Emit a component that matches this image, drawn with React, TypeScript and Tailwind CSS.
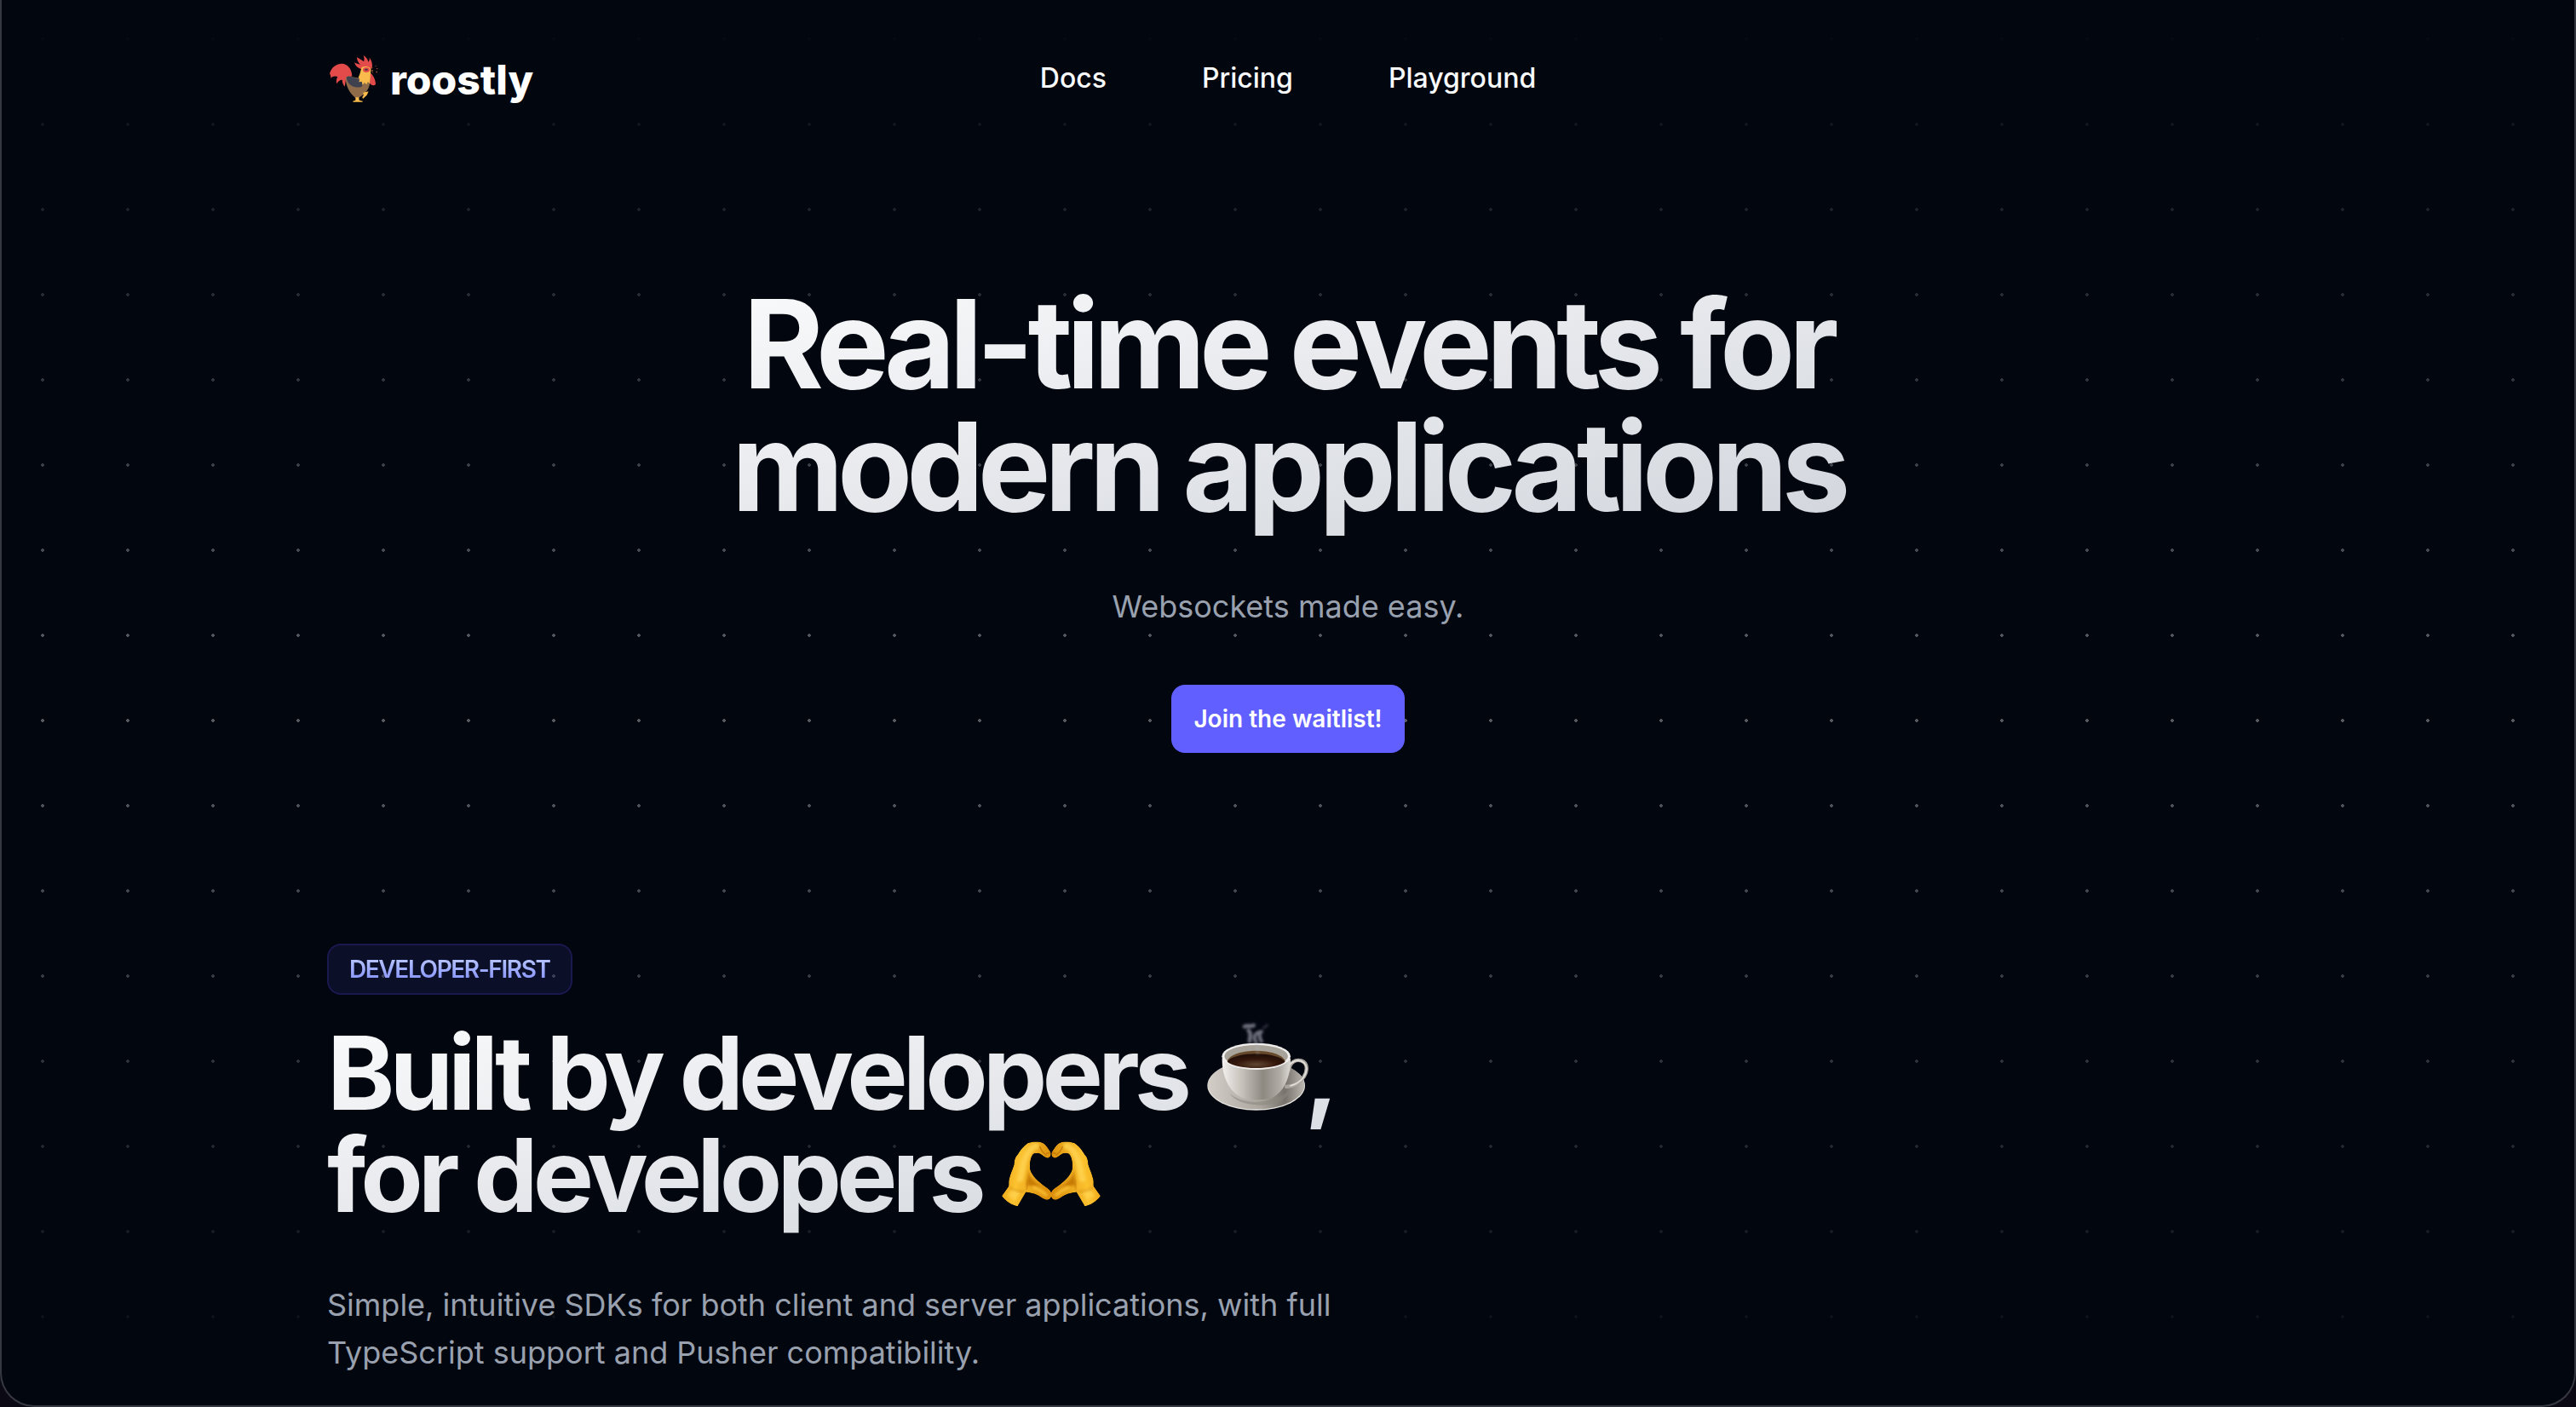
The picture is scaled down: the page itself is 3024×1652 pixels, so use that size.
import React from 'react';

const navLinks = [
  { label: 'Docs', href: '#docs' },
  { label: 'Pricing', href: '#pricing' },
  { label: 'Playground', href: '#playground' },
];

const Rooster = () => (
  <svg className="w-[60px] h-[60px]" viewBox="44 43 180 180" aria-hidden="true">
    {/* Tail */}
    <path fill="#e34b4b" d="M53 110C59 87 78 75 96 75c20 1 35 18 36 44l-20 8c-4 8-3 18-6 29-6-6-9-16-9-24-8 0-14 6-20 14-1-10 0-18 4-25-9-3-17-2-24 5 0-7-1-11-4-16z" />
    {/* Body */}
    <path fill="#8f6b4a" d="M109 124c0 30 14 56 36 73h8c20-12 38-26 42-54l-36-16-40-8z" />
    <path fill="#3f414f" d="M114 121c12-3 34 4 50 14 6 6 7 14 2 21-18 7-44-1-51-21-2-5-3-9-1-14z" />
    {/* Comb */}
    <path fill="#e34b4b" d="M140 71c7 5 14 5 21 8-8-8-12-17-12-26 7 4 16 9 24 15 3-7 2-14-1-22 9 5 15 13 17 23 4-4 5-9 4-15 8 10 12 24 9 38l-22 6-19-5c-10-3-18-11-21-22z" />
    {/* Head */}
    <path fill="#f9bb4b" d="M166 88c12-5 26-3 32 6l-2 52-9-6-4 9-7-7-7 8-3-12-10 2 3-10-5-7c7-10 7-24 12-35z" />
    <ellipse cx="182" cy="97" rx="12" ry="9" fill="#e34b4b" />
    <ellipse cx="182" cy="96" rx="6" ry="3" fill="#4b3540" />
    <path fill="#e34b4b" d="M197 108c10 9 18 24 18 40-6 7-17 4-21-5 4-12 1-24 3-35z" />
    <path fill="#94502f" d="M199 88h5v4h-5zM198 98h8v4h-8zM214 82h3v3h-3zM218 91h4v4h-4zM216 102h5v5h-5zM202 105h4v3h-4z" />
    {/* Legs */}
    <path fill="#f9bb4b" d="M144 194h12l1 10 12 3v3h-34v-3l9-3zM171 177l19-4-6 13-14 13-2-6 4-6z" />
  </svg>
);

const CoffeeCup = () => (
  <svg className="inline align-baseline overflow-visible w-[120px] h-[96px] -mr-1" viewBox="104 83 360 288" role="img" aria-label="coffee">
    <defs>
      <linearGradient id="saucer" x1="0" y1="0" x2="1" y2="0">
        <stop offset="0" stopColor="#d2cdc7" />
        <stop offset="0.55" stopColor="#aaa59d" />
        <stop offset="0.8" stopColor="#77726b" />
        <stop offset="1" stopColor="#bdb9b2" />
      </linearGradient>
      <linearGradient id="cup" x1="0" y1="0" x2="1" y2="0">
        <stop offset="0" stopColor="#f2f0ee" />
        <stop offset="0.3" stopColor="#c4bfb8" />
        <stop offset="0.6" stopColor="#8d8981" />
        <stop offset="0.85" stopColor="#b1ada6" />
        <stop offset="1" stopColor="#dedbd7" />
      </linearGradient>
      <radialGradient id="brew" cx="0.5" cy="0.75" r="0.6">
        <stop offset="0" stopColor="#5f4632" />
        <stop offset="0.6" stopColor="#35170b" />
        <stop offset="1" stopColor="#241009" />
      </radialGradient>
      <filter id="steam" x="-30%" y="-30%" width="160%" height="160%">
        <feGaussianBlur stdDeviation="4" />
      </filter>
    </defs>
    <ellipse cx="283" cy="286" rx="172" ry="87" fill="#e6e3df" />
    <ellipse cx="283" cy="283" rx="170" ry="86" fill="url(#saucer)" />
    <path d="M190 315c60 45 150 35 215-15-20 50-80 58-120 54-45-3-75-14-95-39z" fill="#8b867e" opacity="0.55" />
    <path d="M396 236c6-34 26-43 46-38 24 8 22 38 8 58-16 24-42 34-66 34" fill="none" stroke="#aaa59f" strokeWidth="13" />
    <path d="M400 214c14-18 36-22 52-8 12 14 8 34-2 50-14 20-32 27-48 31" fill="none" stroke="#e4e1dd" strokeWidth="5" />
    <path d="M163 190c-1 70 28 120 72 140 34 9 68 8 102 0 44-22 68-74 67-140z" fill="url(#cup)" />
    <ellipse cx="283" cy="183" rx="121" ry="47" fill="#f0efed" />
    <ellipse cx="283" cy="182" rx="112" ry="39" fill="#a8a39a" />
    <path d="M181 199c18-48 184-48 204 0-38 30-164 32-204 0z" fill="#674a2c" />
    <path d="M181 202c22-38 178-38 204 0-38 28-164 30-204 0z" fill="url(#brew)" />
    <g fill="none" stroke="#b6b8c6" strokeLinecap="round" filter="url(#steam)">
      <path d="M242 78c10-6 22 2 32-4M256 92c12 10 4 22 4 38" strokeWidth="14" opacity="0.6" />
      <path d="M282 132c-10-16-6-32 20-36M298 98c-6 14-4 22 4 32" strokeWidth="12" opacity="0.6" />
      <path d="M308 82c8-2 12-6 14-10M288 138v36" strokeWidth="6" opacity="0.35" />
    </g>
  </svg>
);

const handOutline =
  'M108 280l24-34c2-8-1-14 2-26 4-18 12-34 17-50 2-16 2-24 12-35 10-16 22-32 36-41 14-6 32-6 46-4 12 3 18 10 24 19l11 16c3 10 0 19-11 21-14-2-20-15-33-17-10-1-17 0-21 8-7 13-8 28-8 42 1 12 6 20 13 30 12 16 34 32 50 44 9 6 14 14 13 25-1 9-8 15-17 15-13-1-22-12-34-17-12-6-24-8-39-10l-29 50c-22-4-40-16-56-36z';

const Hand = () => (
  <g clipPath="url(#hand-clip)">
    <path fill="url(#hand)" d={handOutline} />
    {/* Shading under the thumb and along the fingers */}
    <path d="M202 186c2 26 16 42 48 66-20-8-38-10-54-8z" fill="#c07204" opacity="0.85" filter="url(#soft)" />
    <path d="M194 258c4-14 6-24 4-36" fill="none" stroke="#b86c04" strokeWidth="6" opacity="0.6" filter="url(#soft)" />
    <path d="M228 104c-30 12-42 46-48 84-2 16-6 26-8 32" fill="none" stroke="#ffd452" strokeWidth="22" strokeLinecap="round" opacity="0.8" filter="url(#soft)" />
    <path d="M128 278l28 18 16-30-26-10z" fill="#ffd452" opacity="0.7" filter="url(#soft)" />
    <path d="M134 248c14 12 32 16 50 16" fill="none" stroke="#bd7306" strokeWidth="4" opacity="0.6" filter="url(#soft)" />
    <path d="M242 106c4 12 12 22 22 30M266 130l12-3" fill="none" stroke="#b56d05" strokeWidth="4" strokeLinecap="round" opacity="0.75" />
    <path d="M222 250c14 5 28 14 42 26" fill="none" stroke="#ffc93d" strokeWidth="12" strokeLinecap="round" opacity="0.7" filter="url(#soft)" />
  </g>
);

const HeartHands = () => (
  <svg className="inline align-baseline w-[120px] h-[84px]" viewBox="102 84 360 252" role="img" aria-label="heart hands">
    <defs>
      <linearGradient id="hand" x1="0" y1="0" x2="1" y2="0.2">
        <stop offset="0" stopColor="#e49a0c" />
        <stop offset="0.4" stopColor="#fcc22f" />
        <stop offset="1" stopColor="#dc900b" />
      </linearGradient>
      <clipPath id="hand-clip">
        <path d={handOutline} />
      </clipPath>
      <filter id="soft" x="-30%" y="-30%" width="160%" height="160%">
        <feGaussianBlur stdDeviation="4" />
      </filter>
    </defs>
    <Hand />
    <g transform="matrix(-1 0 0 1 564 0)">
      <Hand />
    </g>
  </svg>
);

const Header = () => (
  <header className="grid grid-cols-[1fr_auto_1fr] items-center h-[184px]">
    <a href="#home" className="flex items-center gap-[14px] pt-1 text-white">
      <Rooster />
      <span className="text-5xl leading-[56px] font-extrabold">roostly</span>
    </a>
    <nav className="flex items-center gap-28">
      {navLinks.map((link) => (
        <a key={link.label} href={link.href} className="text-[32px] leading-10 font-medium text-gray-50">
          {link.label}
        </a>
      ))}
    </nav>
  </header>
);

const Hero = () => (
  <section className="flex flex-col items-center pt-[148px] text-center">
    <h1 className="max-w-[1400px] px-2 pb-4 text-[144px] leading-[144px] font-bold tracking-tighter text-transparent bg-clip-text bg-linear-to-br from-gray-50 via-gray-200 to-gray-300">
      Real-time events for
      <br />
      modern applications
    </h1>
    <p className="mt-12 text-4xl leading-[56px] text-gray-400">Websockets made easy.</p>
    <button type="button" className="mt-16 h-20 px-[26px] rounded-2xl bg-[#615fff] text-[28px] leading-10 font-semibold text-white">
      Join the waitlist!
    </button>
  </section>
);

const Developers = () => (
  <section className="flex flex-col items-start pt-56 pb-8">
    <div className="flex items-center h-[60px] px-6 rounded-2xl border-2 border-[#1b1850] bg-[#615fff]/10">
      <span className="text-[28px] leading-10 font-semibold tracking-tighter text-transparent bg-clip-text bg-linear-to-b from-[#c6d2ff] to-[#7c86ff]">
        DEVELOPER-FIRST
      </span>
    </div>
    <h2 className="mt-8 pb-4 text-[120px] leading-[120px] font-bold tracking-tighter text-transparent bg-clip-text bg-linear-to-br from-gray-50 via-gray-200 to-gray-300">
      Built by developers <CoffeeCup />,
      <br />
      for developers <HeartHands />
    </h2>
    <p className="mt-12 max-w-[1200px] text-4xl leading-[56px] text-gray-400">
      Simple, intuitive SDKs for both client and server applications, with full TypeScript support and Pusher compatibility.
    </p>
  </section>
);

const App = () => {
  return (
    <div className="bg-[#0b0a14] font-['Inter',sans-serif]">
      <main className="relative min-h-screen overflow-hidden border-x-2 border-b-2 border-[#363841] rounded-b-[40px] bg-[#02060f]">
        {/* Dot grid, fading out towards the top and bottom */}
        <div className="absolute inset-0 bg-[radial-gradient(circle,rgba(255,255,255,0.35)_2px,transparent_2px)] bg-size-[100px_100px] bg-position-[-2px_-4px] mask-[linear-gradient(to_bottom,transparent,black_50%,transparent)]" />
        <div className="relative mx-auto max-w-[2256px]">
          <Header />
          <Hero />
          <Developers />
        </div>
      </main>
    </div>
  );
};

export default App;
